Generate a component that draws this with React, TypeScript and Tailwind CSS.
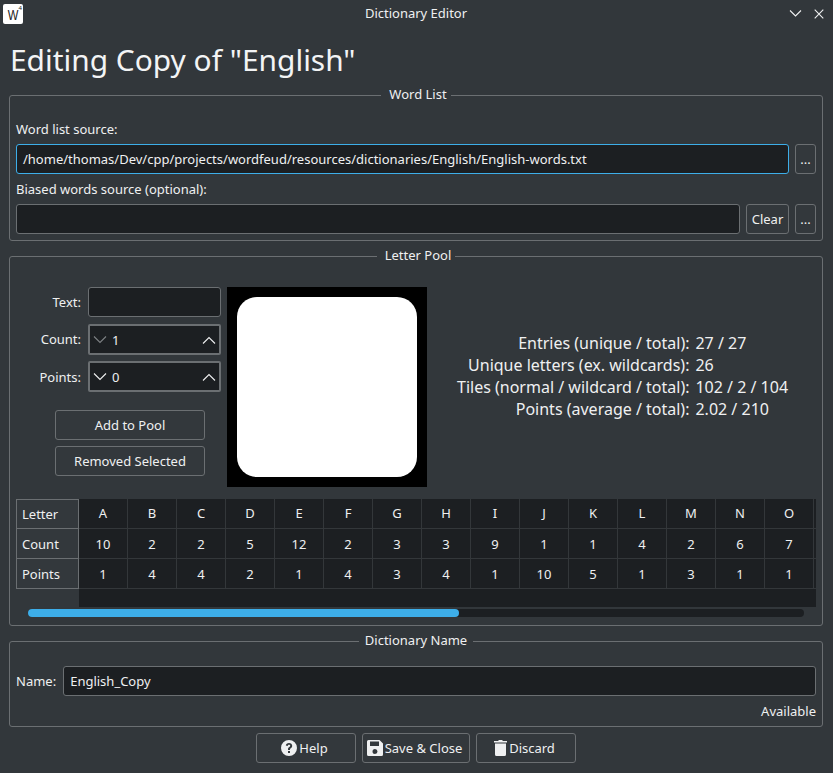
import { ReactNode } from 'react'

const LETTERS = 'ABCDEFGHIJKLMNO'.split('')
const COUNTS = [10, 2, 2, 5, 12, 2, 3, 3, 9, 1, 1, 4, 2, 6, 7]
const POINTS = [1, 4, 4, 2, 1, 4, 3, 4, 1, 10, 5, 1, 3, 1, 1]

const STATS = [
  ['Entries (unique / total):', '27 / 27'],
  ['Unique letters (ex. wildcards):', '26'],
  ['Tiles (normal / wildcard / total):', '102 / 2 / 104'],
  ['Points (average / total):', '2.02 / 210'],
]

function Group({ title, className, legendClass = '', children }: { title: string; className: string; legendClass?: string; children: ReactNode }) {
  return (
    <fieldset className={`ml-[9px] mr-[10px] border border-[#6b6f72] rounded-[3px] px-[6px] min-w-0 ${className}`}>
      <legend className={`mx-auto px-[6px] h-[18px] leading-[16px] ${legendClass}`}>{title}</legend>
      {children}
    </fieldset>
  )
}

function Btn({ children, className = '' }: { children: ReactNode; className?: string }) {
  return (
    <div className={`flex items-center justify-center border border-[#6b6f72] rounded-[3px] bg-[#33383c] shrink-0 ${className}`}>
      {children}
    </div>
  )
}

function Input({ children, focused, className = '' }: { children?: ReactNode; focused?: boolean; className?: string }) {
  return (
    <div className={`flex items-center h-[30px] px-[6px] bg-[#1c1f22] border rounded-[3px] ${focused ? 'border-[#3daee9]' : 'border-[#6b6f72]'} ${className}`}>
      {children}
    </div>
  )
}

function Chevron({ up, dim }: { up?: boolean; dim?: boolean }) {
  return (
    <svg width="14" height="8" viewBox="0 0 14 8" fill="none" stroke={dim ? '#7d8184' : '#eff0f1'} strokeWidth="1.1">
      <path d={up ? 'M1 7.5 7 1.500 13 7.500' : 'M1 .5 7 6.500 13 .5'} />
    </svg>
  )
}

function Spin({ value, dim, className = '' }: { value: string; dim?: boolean; className?: string }) {
  return (
    <div className={`flex items-center h-[31px] pl-[3px] pr-[3px] bg-[#1c1f22] border-2 border-[#6b6f72] rounded-[2px] ${className}`}>
      <Chevron dim={dim} />
      <span className="ml-[5px] flex-1">{value}</span>
      <Chevron up />
    </div>
  )
}

function TableRow({ label, cells, first }: { label: string; cells: (string | number)[]; first?: boolean }) {
  return (
    <div className="flex h-[30px]">
      <div className={`w-[63px] shrink-0 flex items-center pl-[5px] bg-[#33383c] border-x border-b border-[#6b6f72] ${first ? 'border-t' : 'pt-[1px]'}`}>
        {label}
      </div>
      {cells.map((c, i) => (
        <div
          key={i}
          className={`w-[49px] shrink-0 flex items-center justify-center border-r border-b border-[#33373a] bg-[#1c1f22] ${first ? 'pb-[1px]' : ''}`}
        >
          {c}
        </div>
      ))}
      <div className="flex-1 border-b border-[#33373a] bg-[#1c1f22]" />
    </div>
  )
}

export default function App() {
  return (
    <div className="w-[833px] h-[773px] overflow-hidden flex flex-col bg-[#32373b] text-[#eff0f1] text-[13px] leading-[18px] font-['Noto_Sans',sans-serif]">
      {/* title bar */}
      <div className="h-[27px] flex items-center pl-[3px] pr-[9px] shrink-0">
        <div className="relative w-[20px] h-[20px] bg-white rounded-[2px] text-[#222]">
          <span className="absolute left-[3px] top-[3px] inline-block text-[15px] leading-[15px] scale-x-75 font-['Liberation_Sans',sans-serif]">W</span>
          <span className="absolute right-[1px] top-[1px] text-[6px] leading-[7px]">4</span>
        </div>
        <div className="flex-1 text-center pl-[20px] -mt-[1px]">Dictionary Editor</div>
        <svg width="13" height="13" viewBox="0 0 13 13" fill="none" stroke="#eff0f1" strokeWidth="1.1" className="mr-[12px]">
          <path d="M1 3.500 6.500 9 12 3.500" />
        </svg>
        <svg width="10" height="10" viewBox="0 0 10 10" fill="none" stroke="#eff0f1" strokeWidth="1.1">
          <path d="M.7.7 9.300 9.300M9.300.7.7 9.300" />
        </svg>
      </div>

      <div className="pl-[10px] h-[59px] shrink-0 text-[29.9px] leading-[66px] text-[#f3f4f5]">Editing Copy of "English"</div>

      <Group title="Word List" legendClass="relative left-[2px]" className="h-[155px] shrink-0">
        <div className="pt-[16px] h-[40px]">Word list source:</div>
        <div className="flex gap-[6px]">
          <Input focused className="flex-1">/home/thomas/Dev/cpp/projects/wordfeud/resources/dictionaries/English/English-words.txt</Input>
          <Btn className="w-[21px] h-[30px]">...</Btn>
        </div>
        <div className="h-[30px] pt-[6px]">Biased words source (optional):</div>
        <div className="flex gap-[6px]">
          <Input className="flex-1" />
          <Btn className="w-[43px] h-[30px]">Clear</Btn>
          <Btn className="w-[21px] h-[30px]">...</Btn>
        </div>
      </Group>

      <Group title="Letter Pool" legendClass="relative left-[2px]" className="mt-[6px] h-[379px] shrink-0">
        <div className="flex pt-[22px]">
          <div className="w-[205px] shrink-0">
            <div className="flex items-center gap-[7px]">
              <span className="w-[65px] text-right">Text:</span>
              <Input className="w-[133px]" />
            </div>
            <div className="flex items-center gap-[7px] mt-[7px]">
              <span className="w-[65px] text-right -mt-[1px]">Count:</span>
              <Spin value="1" dim className="w-[133px]" />
            </div>
            <div className="flex items-center gap-[7px] mt-[6px]">
              <span className="w-[65px] text-right">Points:</span>
              <Spin value="0" className="w-[133px]" />
            </div>
            <Btn className="w-[150px] h-[30px] ml-[39px] mt-[18px]">Add to Pool</Btn>
            <Btn className="w-[150px] h-[30px] ml-[39px] mt-[6px]">Removed Selected</Btn>
          </div>
          <div className="ml-[6px] w-[200px] h-[200px] p-[10px] bg-black shrink-0">
            <div className="w-full h-full bg-white rounded-[20px]" />
          </div>
          <div className="ml-[30px] mt-[45px] self-start grid grid-cols-[auto_auto] gap-x-[6px] text-[16px] leading-[22px]">
            {STATS.map(([label, value]) => (
              <div key={label} className="contents">
                <span className="text-right">{label}</span>
                <span>{value}</span>
              </div>
            ))}
          </div>
        </div>

        <div className="mt-[12px] h-[108px] overflow-hidden bg-[linear-gradient(to_right,#32373b_63px,#1c1f22_63px)]">
          <TableRow first label="Letter" cells={LETTERS} />
          <TableRow label="Count" cells={COUNTS} />
          <TableRow label="Points" cells={POINTS} />
        </div>

        <div className="mt-[2px] mx-[12px] h-[8px] rounded-full bg-[#1c1f22]">
          <div className="w-[431px] h-full rounded-full bg-[#3daee9]" />
        </div>
      </Group>

      <Group title="Dictionary Name" className="mt-[6px] h-[95px] shrink-0">
        <div className="flex items-center gap-[7px] pt-[16px]">
          <span>Name:</span>
          <Input className="flex-1">English_Copy</Input>
        </div>
        <div className="text-right h-[30px] leading-[30px]">Available</div>
      </Group>

      <div className="flex justify-center gap-[6px] mt-[6px] pr-[1px]">
        <Btn className="w-[100px] h-[30px] gap-[2px] pr-[3px]">
          <svg width="16" height="16" viewBox="0 0 16 16">
            <path
              fill="#eff0f1"
              fillRule="evenodd"
              d="M8 0a8 8 0 1 1 0 16A8 8 0 0 1 8 0ZM7 11v2h2v-2H7Zm1-8C6.200 3 5 4 4.800 5.600l1.900.3C6.800 5.200 7.300 4.800 8 4.800c.7 0 1.200.4 1.200 1 0 .5-.3.8-.9 1.200C7.400 7.600 7 8.200 7 9.200V10h2v-.6c0-.5.2-.8.8-1.200.9-.6 1.400-1.300 1.400-2.400C11.200 4.100 9.900 3 8 3Z"
            />
          </svg>
          Help
        </Btn>
        <Btn className="w-[108px] h-[30px] gap-[2px] pr-[3px]">
          <svg width="16" height="16" viewBox="0 0 16 16">
            <path
              fill="#eff0f1"
              fillRule="evenodd"
              d="M1.500 0H12.500L16 3.500V14.500A1.500 1.500 0 0 1 14.500 16H1.500A1.500 1.500 0 0 1 0 14.500V1.500A1.500 1.500 0 0 1 1.500 0ZM3 1.500V6H12V1.500H3ZM8 9A2.500 2.500 0 1 0 8 14 2.500 2.500 0 0 0 8 9Z"
            />
          </svg>
          Save &amp; Close
        </Btn>
        <Btn className="w-[100px] h-[30px] gap-[2px] pr-[3px]">
          <svg width="13" height="16" viewBox="0 0 13 16">
            <path fill="#eff0f1" d="M4.500 0h4v1H13v1.500H0V1h4.500V0ZM1 3.500h11V14.500A1.500 1.500 0 0 1 10.500 16h-8A1.500 1.500 0 0 1 1 14.500V3.500Z" />
          </svg>
          Discard
        </Btn>
      </div>
    </div>
  )
}
